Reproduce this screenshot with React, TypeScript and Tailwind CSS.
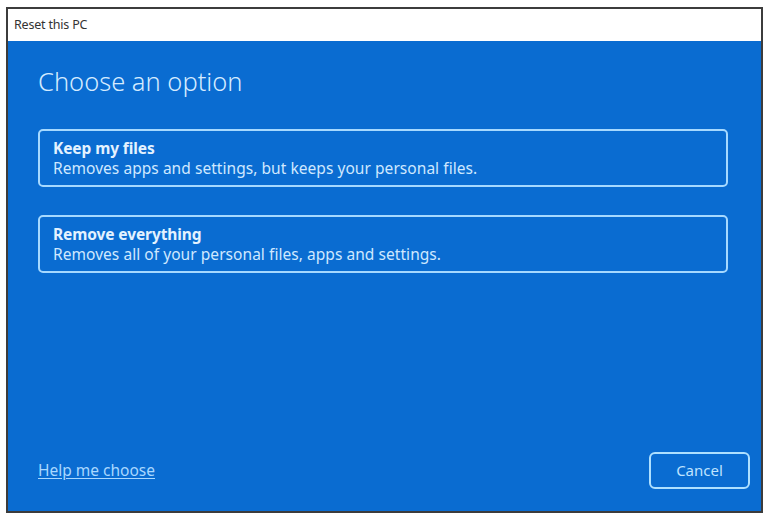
import React from "react";

const options = [
  { title: "Keep my files", desc: "Removes apps and settings, but keeps your personal files." },
  { title: "Remove everything", desc: "Removes all of your personal files, apps and settings." },
];

function App() {
  return (
    <div className="w-[765px] h-[515px] bg-white pt-[7px] pl-[6px] font-['Noto_Sans',sans-serif]">
      <div className="w-[757px] h-[506px] border-2 border-[#3c3c3c] flex flex-col">
        <div className="h-[32px] bg-white flex items-center pl-[6px] text-[12.5px] text-[#333] tracking-[-0.2px]">
          Reset this PC
        </div>
        <div className="flex-1 bg-[#0a6cd1] flex flex-col pl-[30px] pb-[22px]">
          <h1 className="mt-[22px] text-[25.5px] leading-[36px] font-light text-[#d4ebff]">Choose an option</h1>
          <div className="mt-[30px] mr-[33px] flex flex-col gap-[28px]">
            {options.map((option, index) => (
              <div
                key={index}
                className="h-[58px] border-2 border-[#a6d9ff] rounded-[5px] pl-[13px] flex flex-col justify-center text-[#e3f2ff]"
              >
                <div className="text-[15.5px] leading-[20px] font-bold tracking-[-0.1px]">{option.title}</div>
                <div className="text-[15.5px] leading-[21px] text-[#cfe8ff] tracking-[0.05px]">{option.desc}</div>
              </div>
            ))}
          </div>
          <div className="flex-1" />
          <div className="flex items-center justify-between pr-[11px]">
            <a className="text-[15.5px] text-[#a9d8ff] underline underline-offset-2 cursor-pointer">Help me choose</a>
            <button className="w-[101px] h-[37px] border-2 border-[#aee0ff] rounded-[6px] text-[15px] text-[#bfe3ff]">
              Cancel
            </button>
          </div>
        </div>
      </div>
    </div>
  );
}

export default App;
